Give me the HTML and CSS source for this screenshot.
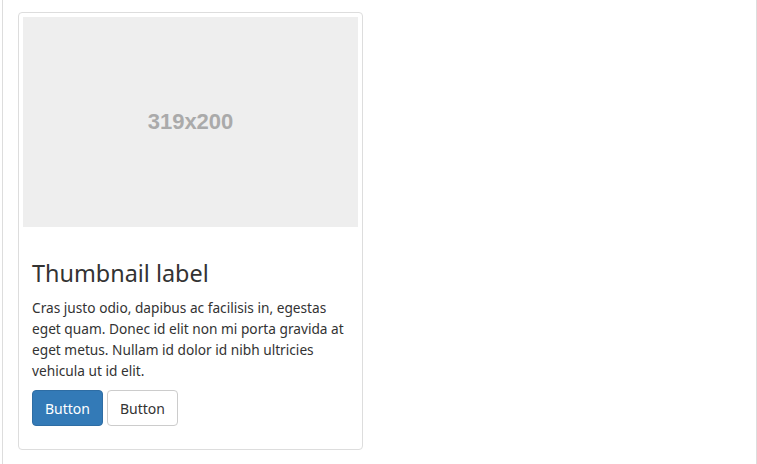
FILE: index.html
```html
<!DOCTYPE html>
<html lang="en">
<head>
<meta charset="utf-8">
<title>Thumbnail</title>
<link rel="stylesheet" href="styles.css">
</head>
<body>
<div class="frame">
  <div class="thumbnail">
    <div class="placeholder">319x200</div>
    <div class="caption">
      <h3 class="caption-title">Thumbnail label</h3>
      <p class="caption-text">Cras justo odio, dapibus ac facilisis in, egestas eget quam. Donec id elit non mi porta gravida at eget metus. Nullam id dolor id nibh ultricies vehicula ut id elit.</p>
      <p class="caption-actions"><a href="#" class="btn btn-primary">Button</a><a href="#" class="btn btn-default">Button</a></p>
    </div>
  </div>
</div>
</body>
</html>
```

FILE: styles.css
```css
* { box-sizing: border-box; }
html, body { margin: 0; padding: 0; background: #fff; }
body {
  font-family: "Noto Sans", "Open Sans", sans-serif;
  font-size: 14px;
  color: #333;
}
.frame {
  margin-left: 2px;
  width: 755px;
  height: 464px;
  border-left: 1px solid #ddd;
  border-right: 1px solid #ddd;
  padding: 12px 0 0 15px;
}
.thumbnail {
  width: 345px;
  padding: 4px;
  border: 1px solid #ddd;
  border-radius: 4px;
  background: #fff;
}
.placeholder {
  height: 210px;
  background: #eee;
  display: flex;
  align-items: center;
  justify-content: center;
  font-family: "Liberation Sans", Arial, sans-serif;
  font-weight: bold;
  font-size: 22px;
  color: #aaa;
}
.caption {
  padding: 9px;
}
.caption-title {
  margin: 24px 0 11px;
  font-size: 23.4px;
  line-height: 26px;
  font-weight: 400;
  color: #333;
}
.caption-text {
  margin: 0 0 9px;
  font-size: 13.7px;
  line-height: 21px;
}
.caption-actions {
  margin: 0 0 10px;
  display: flex;
  gap: 4px;
}
.btn {
  display: inline-flex;
  align-items: center;
  justify-content: center;
  height: 36px;
  padding: 0 12px;
  border: 1px solid transparent;
  border-radius: 4px;
  font-size: 14px;
  text-decoration: none;
}
.btn-primary {
  background: #337ab7;
  border-color: #2e6da4;
  color: #fff;
}
.btn-default {
  background: #fff;
  border-color: #ccc;
  color: #333;
}
```
